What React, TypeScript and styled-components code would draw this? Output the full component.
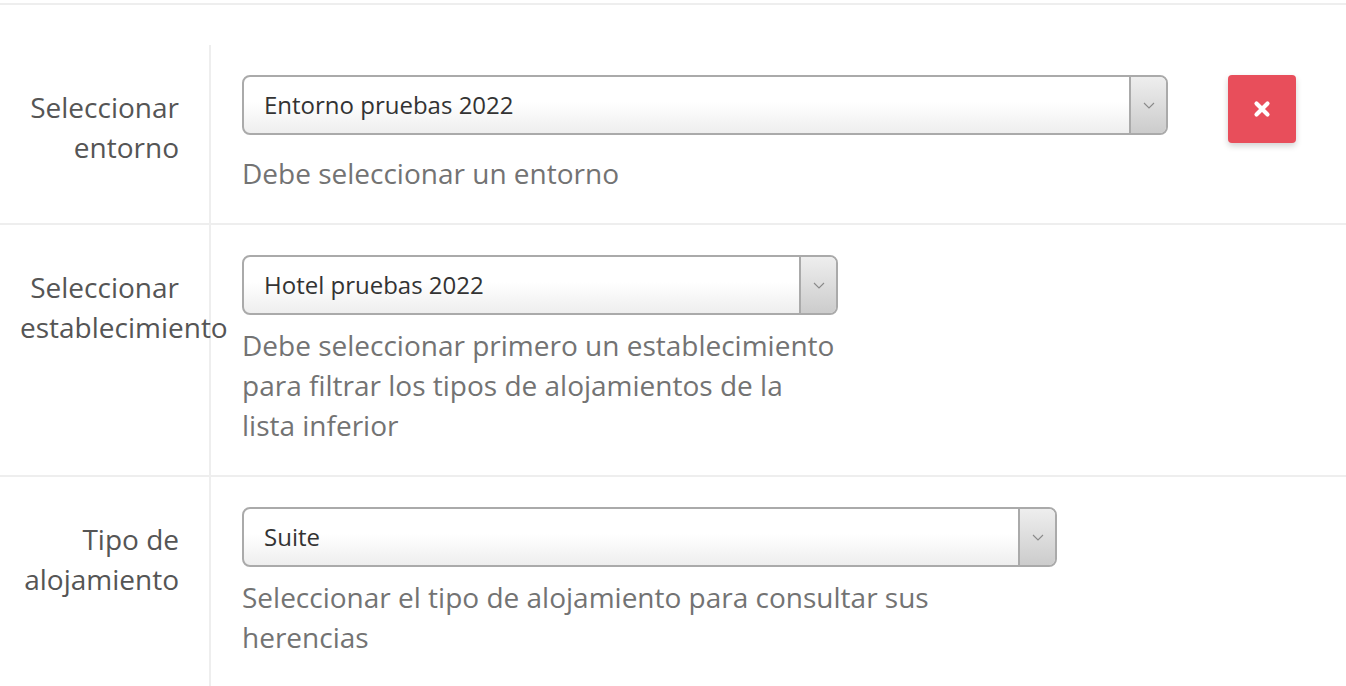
import styled, { createGlobalStyle } from 'styled-components';

const GlobalStyle = createGlobalStyle`
  html, body {
    margin: 0;
    padding: 0;
    background: #fff;
  }
  body {
    font-family: 'Open Sans', 'Liberation Sans', sans-serif;
    color: #555;
  }
`;

type Field = {
  label: string;
  value: string;
  help: string;
  width: number;
  removable?: boolean;
};

const fields: Field[] = [
  {
    label: 'Seleccionar entorno',
    value: 'Entorno pruebas 2022',
    help: 'Debe seleccionar un entorno',
    width: 926,
    removable: true
  },
  {
    label: 'Seleccionar establecimiento',
    value: 'Hotel pruebas 2022',
    help: 'Debe seleccionar primero un establecimiento para filtrar los tipos de alojamientos de la lista inferior',
    width: 596
  },
  {
    label: 'Tipo de alojamiento',
    value: 'Suite',
    help: 'Seleccionar el tipo de alojamiento para consultar sus herencias',
    width: 815
  }
];

export default function App(): JSX.Element {
  return (
    <>
      <GlobalStyle />
      <Panel>
        {fields.map((f) => (
          <FormRow key={f.label}>
            <Label>{f.label}</Label>
            <Control>
              <ControlLine>
                <Select $width={f.width}>
                  <SelectValue>{f.value}</SelectValue>
                  <Caret>
                    <svg width="12" height="7" viewBox="0 0 12 7">
                      <path d="M1 1l5 5 5-5" fill="none" stroke="#8a8a8a" strokeWidth="1.1" />
                    </svg>
                  </Caret>
                </Select>
                {f.removable && (
                  <RemoveButton type="button" aria-label="Eliminar">
                    <svg width="18" height="18" viewBox="0 0 18 18">
                      <path d="M3.5 3.5l11 11M14.5 3.5l-11 11" stroke="#fff" strokeWidth="4.2" strokeLinecap="round" />
                    </svg>
                  </RemoveButton>
                )}
              </ControlLine>
              <Help $width={f.width}>{f.help}</Help>
            </Control>
          </FormRow>
        ))}
      </Panel>
    </>
  );
}

const Panel = styled.div`
  margin-top: 3px;
  padding-top: 40px;
  border-top: 2px solid #eeeeee;
`;

const FormRow = styled.div`
  display: flex;
  border-bottom: 2px solid #eeeeee;

  &:last-child {
    border-bottom: none;
  }
`;

const Label = styled.div`
  flex: 0 0 211px;
  min-width: 0;
  box-sizing: border-box;
  padding: 42px 30px 30px 20px;
  border-right: 2px solid #eeeeee;
  text-align: right;
  font-size: 28px;
  line-height: 40px;
  color: #555;
`;

const Control = styled.div`
  flex: 1;
  padding: 30px 0 30px 31px;
  min-width: 0;
`;

const ControlLine = styled.div`
  display: flex;
  align-items: flex-start;
  gap: 60px;
`;

const Select = styled.div<{ $width: number }>`
  display: flex;
  width: ${(p) => p.$width}px;
  height: 60px;
  box-sizing: border-box;
  border: 2px solid #aaaaaa;
  border-radius: 8px;
  background: linear-gradient(to bottom, #ffffff 0%, #ffffff 45%, #eeeeee 100%);
  overflow: hidden;
`;

const SelectValue = styled.div`
  flex: 1;
  padding: 0 20px;
  font-size: 24px;
  line-height: 56px;
  color: #333;
`;

const Caret = styled.div`
  flex: 0 0 35px;
  display: flex;
  align-items: center;
  justify-content: center;
  border-left: 2px solid #aaaaaa;
  background: linear-gradient(to bottom, #eeeeee 0%, #cccccc 100%);
`;

const Help = styled.div<{ $width: number }>`
  max-width: ${(p) => p.$width}px;
  margin-top: 10px;
  font-size: 28px;
  line-height: 40px;
  color: #737373;
`;

const RemoveButton = styled.button`
  flex: 0 0 68px;
  width: 68px;
  height: 68px;
  padding: 0;
  border: none;
  border-radius: 4px;
  background: #e84e5b;
  box-shadow: 0 3px 6px rgba(0, 0, 0, 0.18);
  display: flex;
  align-items: center;
  justify-content: center;
  cursor: pointer;
`;
